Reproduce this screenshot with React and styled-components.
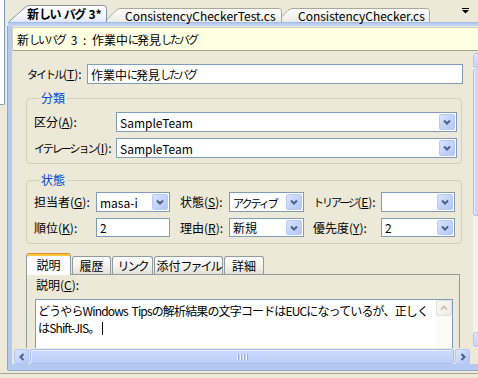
import React from "react";
import styled, { createGlobalStyle } from "styled-components";

const GlobalStyle = createGlobalStyle`
  html, body {
    margin: 0;
    padding: 0;
    background: #ece9d8;
  }
  body {
    font-family: "Noto Sans CJK JP", "Liberation Sans", sans-serif;
    font-size: 12px;
    color: #000;
  }
  u {
    text-decoration-thickness: 1px;
    text-underline-offset: 1px;
  }
`;

/* kana in the reference UI font is proportional, so runs of kana are set tighter */
const Kana = styled.span`
  font-size: ${(p) => p.$size || 11}px;
  letter-spacing: ${(p) => (p.$ls !== undefined ? p.$ls : -2)}px;
`;

const Screen = styled.div`
  width: 478px;
  height: 378px;
  overflow: hidden;
  display: flex;
  flex-direction: column;
  background: #ece9d8;
`;

const Workspace = styled.div`
  flex: none;
  height: 373px;
  display: flex;
`;

const SidePane = styled.div`
  flex: none;
  width: 4px;
  height: 104px;
  margin-right: 3px;
  background: #fff;
  border: 1px solid #7f9db9;
  border-width: 0 1px 1px 0;
  border-bottom-right-radius: 2px;
`;

const Main = styled.div`
  flex: none;
  width: 470px;
  height: 370px;
  display: flex;
  flex-direction: column;
`;

/* ---------- document tabs ---------- */

const Defs = styled.svg`
  position: absolute;
  width: 0;
  height: 0;
`;

const TabStrip = styled.div`
  flex: none;
  height: 22px;
  display: flex;
  align-items: flex-end;
`;

const DocTabBox = styled.div`
  position: relative;
  flex: none;
  box-sizing: border-box;
  width: ${(p) => p.$w}px;
  height: ${(p) => p.$h}px;
  margin-left: ${(p) => p.$shift}px;
  padding-left: ${(p) => p.$pad}px;
  z-index: ${(p) => p.$z};
  display: flex;
  align-items: center;
  font-weight: ${(p) => (p.$active ? 700 : 400)};
  word-spacing: ${(p) => (p.$active ? 1 : 0)}px;
  white-space: nowrap;
`;

const TabOutline = styled.svg`
  position: absolute;
  left: 0;
  top: 0;
`;

const DocTabLabel = styled.span`
  position: relative;
  line-height: 15px;
`;

const MenuGlyph = styled.svg`
  margin: 0 9px 0 auto;
  align-self: center;
  flex: none;
`;

const BlueBar = styled.div`
  flex: none;
  height: 4px;
  background: linear-gradient(#98b4e6, #b9cdf1 40%, #c6d7f5);
`;

function DocTab({ w, h, slant, shift, pad, z, active, children }) {
  const d = `M0.5 ${h} L${slant - 2} 2.5 Q${slant} 0.5 ${slant + 3} 0.5 L${w - 3.5} 0.5 Q${w - 0.5} 0.5 ${w - 0.5} 3.5 L${w - 0.5} ${h}`;
  return (
    <DocTabBox $w={w} $h={h} $shift={shift} $pad={pad} $z={z} $active={active}>
      <TabOutline width={w} height={h}>
        <path
          d={d}
          fill={active ? "url(#docTabOn)" : "url(#docTabOff)"}
          stroke={active ? "#8593ab" : "#aca899"}
        />
      </TabOutline>
      <DocTabLabel>{children}</DocTabLabel>
    </DocTabBox>
  );
}

/* ---------- document frame ---------- */

const DocFrame = styled.div`
  flex: 1;
  display: flex;
  flex-direction: column;
  border: solid #b4c9ef;
  border-width: 0 0 6px 4px;
  box-shadow: -1px 0 0 #8ea8d9, 0 1px 0 #8ea8d9;
  min-height: 0;
`;

const Header = styled.div`
  flex: none;
  height: 22px;
  margin-top: 1px;
  padding-left: 4px;
  display: flex;
  align-items: center;
  background: #ffffe1;
  border-top: 1px solid #d4d0c0;
  border-left: 1px solid #d4d0c0;
  border-bottom: 1px solid #a9a594;
  white-space: pre;
  word-spacing: 3px;
`;

const Body = styled.div`
  flex: 1;
  display: flex;
  min-height: 0;
`;

const Form = styled.div`
  flex: none;
  width: 461px;
  height: 297px;
  box-sizing: border-box;
  padding: 13px 10px 0 14px;
  overflow: hidden;
`;

const TitleRow = styled.div`
  display: grid;
  grid-template-columns: 61px 1fr;
  align-items: center;
`;

const Label = styled.label`
  white-space: nowrap;
  line-height: 14px;
  padding-left: ${(p) => p.$indent || 0}px;
`;

const TextBox = styled.div`
  box-sizing: border-box;
  height: ${(p) => p.$h || 20}px;
  padding: 0 3px;
  display: flex;
  align-items: center;
  background: #fff;
  border: 1px solid #7f9db9;
  white-space: nowrap;
  overflow: hidden;
`;

const ComboBox = styled.div`
  box-sizing: border-box;
  height: ${(p) => p.$h || 20}px;
  display: flex;
  align-items: center;
  background: #fff;
  border: 1px solid #7f9db9;
`;

const ComboText = styled.span`
  flex: 1;
  padding-left: 3px;
  white-space: nowrap;
  overflow: hidden;
`;

const ComboButton = styled.div`
  flex: none;
  box-sizing: border-box;
  width: 16px;
  height: calc(100% - 2px);
  margin-right: 1px;
  display: flex;
  align-items: center;
  justify-content: center;
  border: 1px solid #b7caf6;
  border-radius: 2px;
  background: linear-gradient(135deg, #dbe5fd 0%, #c6d5fc 45%, #b2c6f6 100%);
`;

const Group = styled.fieldset`
  margin: ${(p) => p.$top}px 1px 0 0;
  padding: ${(p) => p.$padTop}px 4px ${(p) => p.$padBottom}px 7px;
  border: 1px solid #d0d0bf;
  border-radius: 4px;
  min-width: 0;
`;

const GroupTitle = styled.legend`
  margin-left: 5px;
  padding: 0 2px;
  line-height: 14px;
  color: #0046d5;
`;

const FieldGrid = styled.div`
  display: grid;
  grid-template-columns: ${(p) => p.$cols};
  row-gap: 6px;
  align-items: center;
`;

/* ---------- page tabs ---------- */

const PageTabs = styled.div`
  margin: 9px 3px 0 0;
`;

const PageTabRow = styled.div`
  height: 21px;
  display: flex;
  align-items: flex-end;
`;

const PageTab = styled.div`
  position: relative;
  z-index: ${(p) => (p.$active ? 1 : 0)};
  flex: none;
  box-sizing: border-box;
  width: ${(p) => p.$w}px;
  height: ${(p) => (p.$active ? 22 : 18)}px;
  margin-left: ${(p) => (p.$active ? 0 : 1)}px;
  margin-bottom: ${(p) => (p.$active ? -1 : 0)}px;
  display: flex;
  align-items: center;
  justify-content: center;
  padding-top: ${(p) => (p.$active ? 1 : 0)}px;
  border: 1px solid #919b9c;
  border-bottom: none;
  border-radius: 3px 3px 0 0;
  background: ${(p) =>
    p.$active ? "#fcfcfe" : "linear-gradient(#ffffff, #f3f2ed 55%, #e3e1d7)"};
  ${(p) =>
    p.$active &&
    "border-top: 1px solid #e68b2c; box-shadow: inset 0 2px 0 #ffc83c;"}
  white-space: nowrap;
  line-height: 14px;
`;

const PagePanel = styled.div`
  height: 90px;
  padding: 3px 6px 0 8px;
  border: 1px solid #919b9c;
`;

const MemoLabel = styled.div`
  margin-left: 1px;
  line-height: 14px;
`;

const Memo = styled.div`
  margin-top: 7px;
  height: 70px;
  display: flex;
  background: #fff;
  border: 1px solid #7f9db9;
`;

const MemoText = styled.div`
  flex: 1;
  padding: 2px 0 0 2px;
  line-height: 17px;
  white-space: nowrap;
  overflow: hidden;
  letter-spacing: -0.85px;
  word-spacing: 2px;
`;

const Caret = styled.span`
  display: inline-block;
  width: 1px;
  height: 13px;
  margin-left: 3px;
  vertical-align: -2px;
  background: #000;
`;

const MemoScroll = styled.div`
  flex: none;
  width: 16px;
  background: #fbfbf8;
`;

const DisabledButton = styled.div`
  box-sizing: border-box;
  width: 16px;
  height: 16px;
  display: flex;
  align-items: center;
  justify-content: center;
  border: 1px solid #e2e1d9;
  border-radius: 2px;
  background: linear-gradient(135deg, #f8f8f4, #eeede6);
`;

/* ---------- scroll bars ---------- */

const VScroll = styled.div`
  flex: none;
  width: 17px;
  height: 295px;
  margin-top: 2px;
  display: flex;
  flex-direction: column;
  background: #f3f2ec;
`;

const HScroll = styled.div`
  flex: none;
  height: 16px;
  padding-top: 1px;
  box-sizing: border-box;
  display: flex;
  align-items: stretch;
  width: 461px;
  background: #ece9d8;
`;

const ScrollButton = styled.div`
  flex: none;
  box-sizing: border-box;
  width: ${(p) => p.$w || 15}px;
  height: ${(p) => p.$h || 15}px;
  margin: ${(p) => p.$m || "0"};
  display: flex;
  align-items: center;
  justify-content: center;
  border: 1px solid #b4c7f5;
  border-radius: 2px;
  background: linear-gradient(135deg, #dde6fd 0%, #c6d5fc 50%, #b3c7f7 100%);
`;

const Thumb = styled.div`
  flex: ${(p) => (p.$len ? "none" : "1")};
  height: ${(p) => (p.$len ? `${p.$len}px` : "auto")};
  margin: ${(p) => p.$m || "0"};
  box-sizing: border-box;
  display: flex;
  align-items: center;
  justify-content: center;
  gap: 1px;
  border: 1px solid #a9bff2;
  border-radius: 2px;
  background: ${(p) =>
    p.$vertical
      ? "linear-gradient(90deg, #cbd9fc, #bccffb)"
      : "linear-gradient(#cddafc, #bbcefa)"};
  box-shadow: inset 1px 1px 0 #e4ecfe;
`;

const Grip = styled.span`
  width: 1px;
  height: 6px;
  background: #eef3fe;
  box-shadow: 1px 0 0 #8cabf0;
  margin-right: 1px;
`;

const Track = styled.div`
  flex: 1;
`;

const StatusEdge = styled.div`
  flex: 1;
  border-top: 1px solid #aca899;
  background: #ece9d8;
`;

/* ---------- small drawings ---------- */

const Chevron = ({ dir = "down", color = "#4d6185" }) => {
  const paths = {
    down: "M1 1.5 L4 4.5 L7 1.5",
    up: "M1 4.5 L4 1.5 L7 4.5",
    left: "M4.5 1 L1.5 4 L4.5 7",
    right: "M1.5 1 L4.5 4 L1.5 7",
  };
  const vertical = dir === "left" || dir === "right";
  return (
    <svg width={vertical ? 6 : 8} height={vertical ? 8 : 6}>
      <path d={paths[dir]} fill="none" stroke={color} strokeWidth="2" />
    </svg>
  );
};

const Combo = ({ value, h }) => (
  <ComboBox $h={h}>
    <ComboText>{value}</ComboText>
    <ComboButton>
      <Chevron dir="down" />
    </ComboButton>
  </ComboBox>
);

export default function App() {
  return (
    <>
      <GlobalStyle />
      <Defs>
        <defs>
          <linearGradient id="docTabOn" x1="0" y1="0" x2="0" y2="1">
            <stop offset="0" stopColor="#ffffff" />
            <stop offset="0.6" stopColor="#f6f8fd" />
            <stop offset="1" stopColor="#dfe8f9" />
          </linearGradient>
          <linearGradient id="docTabOff" x1="0" y1="0" x2="0" y2="1">
            <stop offset="0" stopColor="#fefefd" />
            <stop offset="1" stopColor="#ecebe4" />
          </linearGradient>
        </defs>
      </Defs>
      <Screen>
        <Workspace>
          <SidePane />
          <Main>
            <TabStrip>
              <DocTab w={99} h={17} slant={19} shift={0} pad={19} z={3} active>
                新<Kana $size={12} $ls={-1.5}>しい</Kana> <Kana $size={12} $ls={-1.5}>バグ</Kana> 3*
              </DocTab>
              <DocTab w={178} h={14} slant={14} shift={-3} pad={21} z={2}>
                ConsistencyCheckerTest.cs
              </DocTab>
              <DocTab w={154} h={14} slant={14} shift={-6} pad={22} z={1}>
                ConsistencyChecker.cs
              </DocTab>
              <MenuGlyph width="7" height="6">
                <rect x="0" y="0" width="7" height="1" fill="#000" />
                <path d="M0 2 H7 L3.5 5.5 Z" fill="#000" />
              </MenuGlyph>
            </TabStrip>
            <BlueBar />
            <DocFrame>
              <Header>
                新<Kana>しい</Kana> <Kana>バグ</Kana> 3 : 作業中<Kana>に</Kana>発見<Kana>したバグ</Kana>
              </Header>
              <Body>
                <Form>
                  <TitleRow>
                    <Label $indent={1}>
                      <Kana>タイトル</Kana>(<u>T</u>):
                    </Label>
                    <TextBox>
                      作業中<Kana>に</Kana>発見<Kana>したバグ</Kana>
                    </TextBox>
                  </TitleRow>

                  <Group $top={7} $padTop={7} $padBottom={5}>
                    <GroupTitle>分類</GroupTitle>
                    <FieldGrid $cols="82px 1fr">
                      <Label>
                        区分(<u>A</u>):
                      </Label>
                      <Combo value="SampleTeam" />
                      <Label>
                        <Kana>イテレーション</Kana>(<u>I</u>):
                      </Label>
                      <Combo value="SampleTeam" />
                    </FieldGrid>
                  </Group>

                  <Group $top={9} $padTop={5} $padBottom={6}>
                    <GroupTitle>状態</GroupTitle>
                    <FieldGrid $cols="62px 74px 59px 75px 77px 74px">
                      <Label>
                        担当者(<u>G</u>):
                      </Label>
                      <Combo value="masa-i" />
                      <Label $indent={10}>
                        状態(<u>S</u>):
                      </Label>
                      <Combo value={<Kana>アクティブ</Kana>} />
                      <Label $indent={9}>
                        <Kana>トリアージ</Kana>(<u>E</u>):
                      </Label>
                      <Combo value="" />

                      <Label>
                        順位(<u>K</u>):
                      </Label>
                      <TextBox $h={19}>2</TextBox>
                      <Label $indent={10}>
                        理由(<u>R</u>):
                      </Label>
                      <Combo value="新規" h={19} />
                      <Label $indent={9}>
                        優先度(<u>Y</u>):
                      </Label>
                      <Combo value="2" h={19} />
                    </FieldGrid>
                  </Group>

                  <PageTabs>
                    <PageTabRow>
                      <PageTab $w={45} $active>
                        説明
                      </PageTab>
                      <PageTab $w={39}>履歴</PageTab>
                      <PageTab $w={41}>
                        <Kana $size={12} $ls={-2}>リンク</Kana>
                      </PageTab>
                      <PageTab $w={69}>
                        添付<Kana $size={12} $ls={-2}>ファイル</Kana>
                      </PageTab>
                      <PageTab $w={40}>詳細</PageTab>
                    </PageTabRow>
                    <PagePanel>
                      <MemoLabel>
                        説明(<u>C</u>):
                      </MemoLabel>
                      <Memo>
                        <MemoText>
                          どうやらWindows Tipsの解析結果の文字コードはEUCになっているが、正しく
                          <br />
                          はShift-JIS。
                          <Caret />
                        </MemoText>
                        <MemoScroll>
                          <DisabledButton>
                            <Chevron dir="up" color="#c9c7bb" />
                          </DisabledButton>
                        </MemoScroll>
                      </Memo>
                    </PagePanel>
                  </PageTabs>
                </Form>

                <VScroll>
                  <ScrollButton $w={17} $h={15}>
                    <Chevron dir="up" />
                  </ScrollButton>
                  <Thumb $vertical $len={147} $m="1px 0 0 0" />
                  <Track />
                  <ScrollButton $w={17} $h={15} $m="0 0 1px 0">
                    <Chevron dir="down" />
                  </ScrollButton>
                </VScroll>
              </Body>

              <HScroll>
                <ScrollButton $m="0 0 0 2px">
                  <Chevron dir="left" />
                </ScrollButton>
                <Thumb $m="0 1px">
                  <Grip />
                  <Grip />
                  <Grip />
                  <Grip />
                </Thumb>
                <ScrollButton $m="0 3px 0 0">
                  <Chevron dir="right" />
                </ScrollButton>
              </HScroll>
            </DocFrame>
          </Main>
        </Workspace>
        <StatusEdge />
      </Screen>
    </>
  );
}
